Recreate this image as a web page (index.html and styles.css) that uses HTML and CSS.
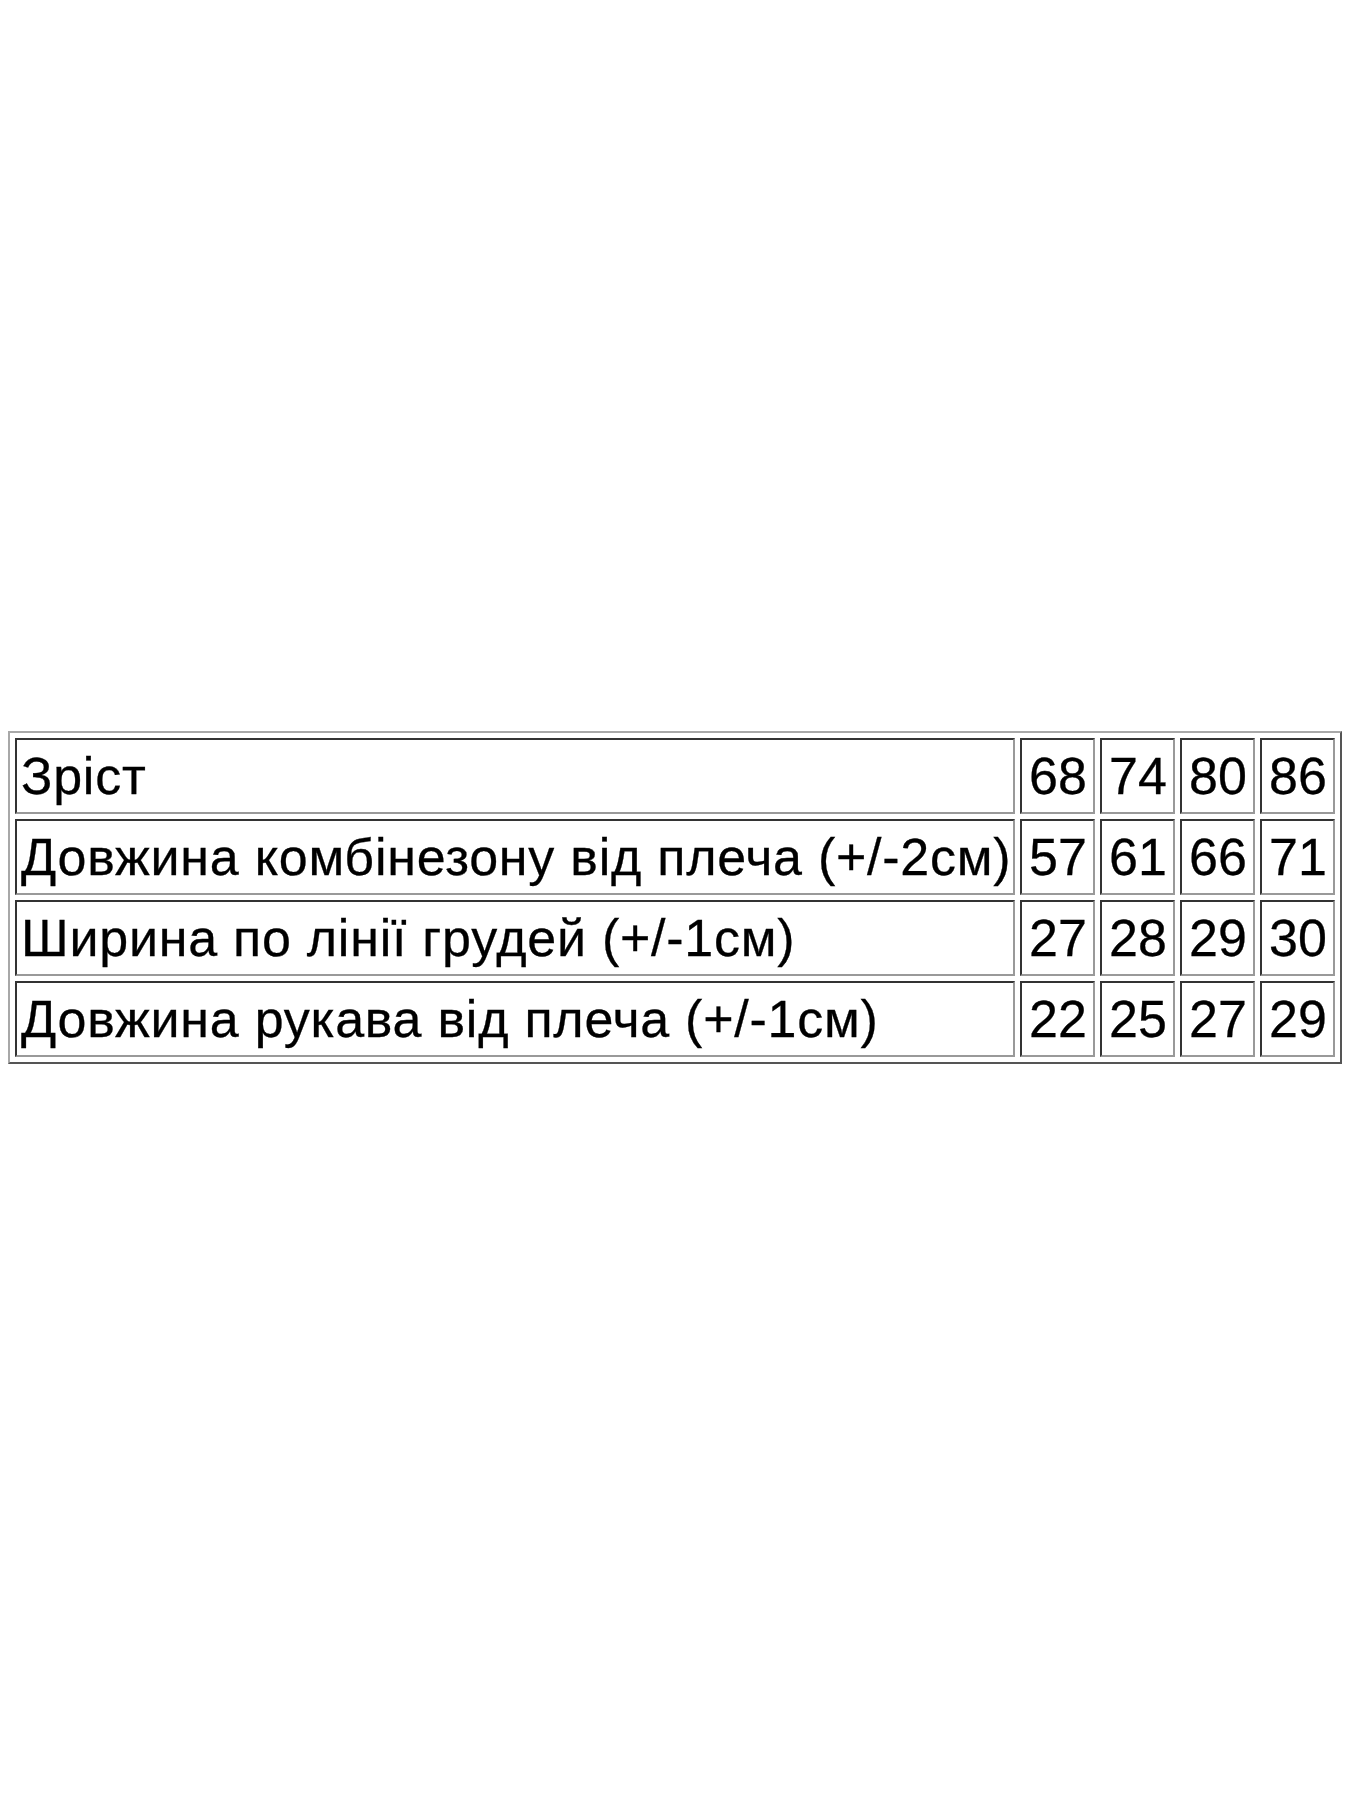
FILE: index.html
```html
<!DOCTYPE html>
<html lang="uk">
<head>
<meta charset="utf-8">
<title>Розмірна сітка</title>
<link rel="stylesheet" href="styles.css">
</head>
<body>
<main class="page">
  <table class="sizes">
    <tbody>
      <tr><td class="label">Зріст</td><td class="num">68</td><td class="num">74</td><td class="num">80</td><td class="num">86</td></tr>
      <tr><td class="label">Довжина комбінезону від плеча (+/-2см)</td><td class="num">57</td><td class="num">61</td><td class="num">66</td><td class="num">71</td></tr>
      <tr><td class="label">Ширина по лінії грудей (+/-1см)</td><td class="num">27</td><td class="num">28</td><td class="num">29</td><td class="num">30</td></tr>
      <tr><td class="label">Довжина рукава від плеча (+/-1см)</td><td class="num">22</td><td class="num">25</td><td class="num">27</td><td class="num">29</td></tr>
    </tbody>
  </table>
</main>
</body>
</html>
```

FILE: styles.css
```css
html, body {
  margin: 0;
  padding: 0;
  background: #fff;
}
.page {
  box-sizing: border-box;
  height: 1800px;
  padding-bottom: 5px;
  display: flex;
  align-items: center;
  justify-content: center;
}
.sizes {
  width: 1334px;
  border-collapse: separate;
  border-spacing: 5px;
  border-width: 2px;
  border-style: solid;
  border-color: #a8a8a8 #555 #555 #a8a8a8;
  font-family: "Liberation Sans", Arial, sans-serif;
  font-size: 52px;
  color: #000;
  table-layout: fixed;
}
.sizes td {
  box-sizing: border-box;
  height: 76px;
  border-width: 2px;
  border-style: solid;
  border-color: #333 #999 #999 #333;
  padding: 0 2px 0 4px;
  vertical-align: middle;
  white-space: nowrap;
  line-height: 60px;
  text-align: left;
  -webkit-text-stroke: 0.3px #000;
}
.sizes .label {
  letter-spacing: 0.75px;
}
.sizes .num {
  width: 75px;
  padding-left: 7px;
}
```
